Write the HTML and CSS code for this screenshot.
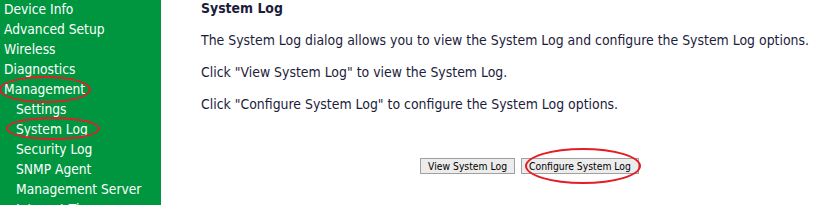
FILE: index.html
```html
<!DOCTYPE html>
<html lang="en">
<head>
  <meta charset="UTF-8">
  <title>System Log</title>
  <link rel="stylesheet" href="styles.css">
</head>
<body>
  <div class="page">
    <div class="menu">
      <p class="item">Device Info</p>
      <p class="item">Advanced Setup</p>
      <p class="item">Wireless</p>
      <p class="item">Diagnostics</p>
      <p class="item"><span class="mark mark-mgmt">Management</span></p>
      <p class="item sub">Settings</p>
      <p class="item sub"><span class="mark mark-log">System Log</span></p>
      <p class="item sub">Security Log</p>
      <p class="item sub">SNMP Agent</p>
      <p class="item sub">Management Server</p>
      <p class="item sub">Internet Time</p>
    </div>

    <div class="main">
      <h3>System Log</h3>
      <p>The System Log dialog allows you to view the System Log and configure the System Log options.</p>
      <p>Click "View System Log" to view the System Log.</p>
      <p>Click "Configure System Log" to configure the System Log options.</p>
      <div class="buttons">
        <button>View System Log</button>
        <button class="mark mark-btn">Configure System Log</button>
      </div>
    </div>
  </div>
</body>
</html>
```

FILE: styles.css
```css
* {
  margin: 0;
  padding: 0;
  box-sizing: border-box;
}

body {
  font-family: 'DejaVu Sans Condensed', 'DejaVu Sans', sans-serif;
  font-size: 13.9px;
  color: #1c1c3c;
  background-color: #ffffff;
  overflow: hidden;
}

.page {
  display: flex;
  height: 205px;
  overflow: hidden;
}

/* Left menu */
.menu {
  width: 161px;
  flex-shrink: 0;
  background-color: #009640;
  color: #ffffff;
  font-size: 13.7px;
}

.menu .item {
  height: 20px;
  line-height: 19px;
  padding-left: 4px;
  white-space: nowrap;
}

.menu .item.sub {
  padding-left: 16px;
}

/* Main content */
.main {
  padding-left: 40px;
}

.main h3 {
  font-size: 13.9px;
  font-weight: bold;
  line-height: 16px;
  margin-bottom: 16px;
}

.main p {
  line-height: 16px;
  margin-bottom: 16px;
  white-space: nowrap;
}

.buttons {
  display: flex;
  justify-content: center;
  gap: 6px;
  margin-top: 46px;
  width: 657px;
}

.buttons button {
  font-family: inherit;
  font-size: 10.3px;
  color: #000;
  background-color: #ececec;
  border: 1px solid #a0a0a0;
  height: 16px;
  padding: 0 7px;
}

/* red hand-drawn rings */
.mark {
  position: relative;
}

.mark::after {
  content: '';
  position: absolute;
  border: 2px solid #e41e26;
  border-radius: 50%;
}

.mark-mgmt::after {
  left: -5px;
  right: -6px;
  top: -5px;
  bottom: -6px;
}

.mark-log::after {
  left: -10px;
  right: -12px;
  top: -4px;
  bottom: -3px;
}

.mark-btn::after {
  left: 3px;
  right: -3px;
  top: -11px;
  bottom: -11px;
}
```
